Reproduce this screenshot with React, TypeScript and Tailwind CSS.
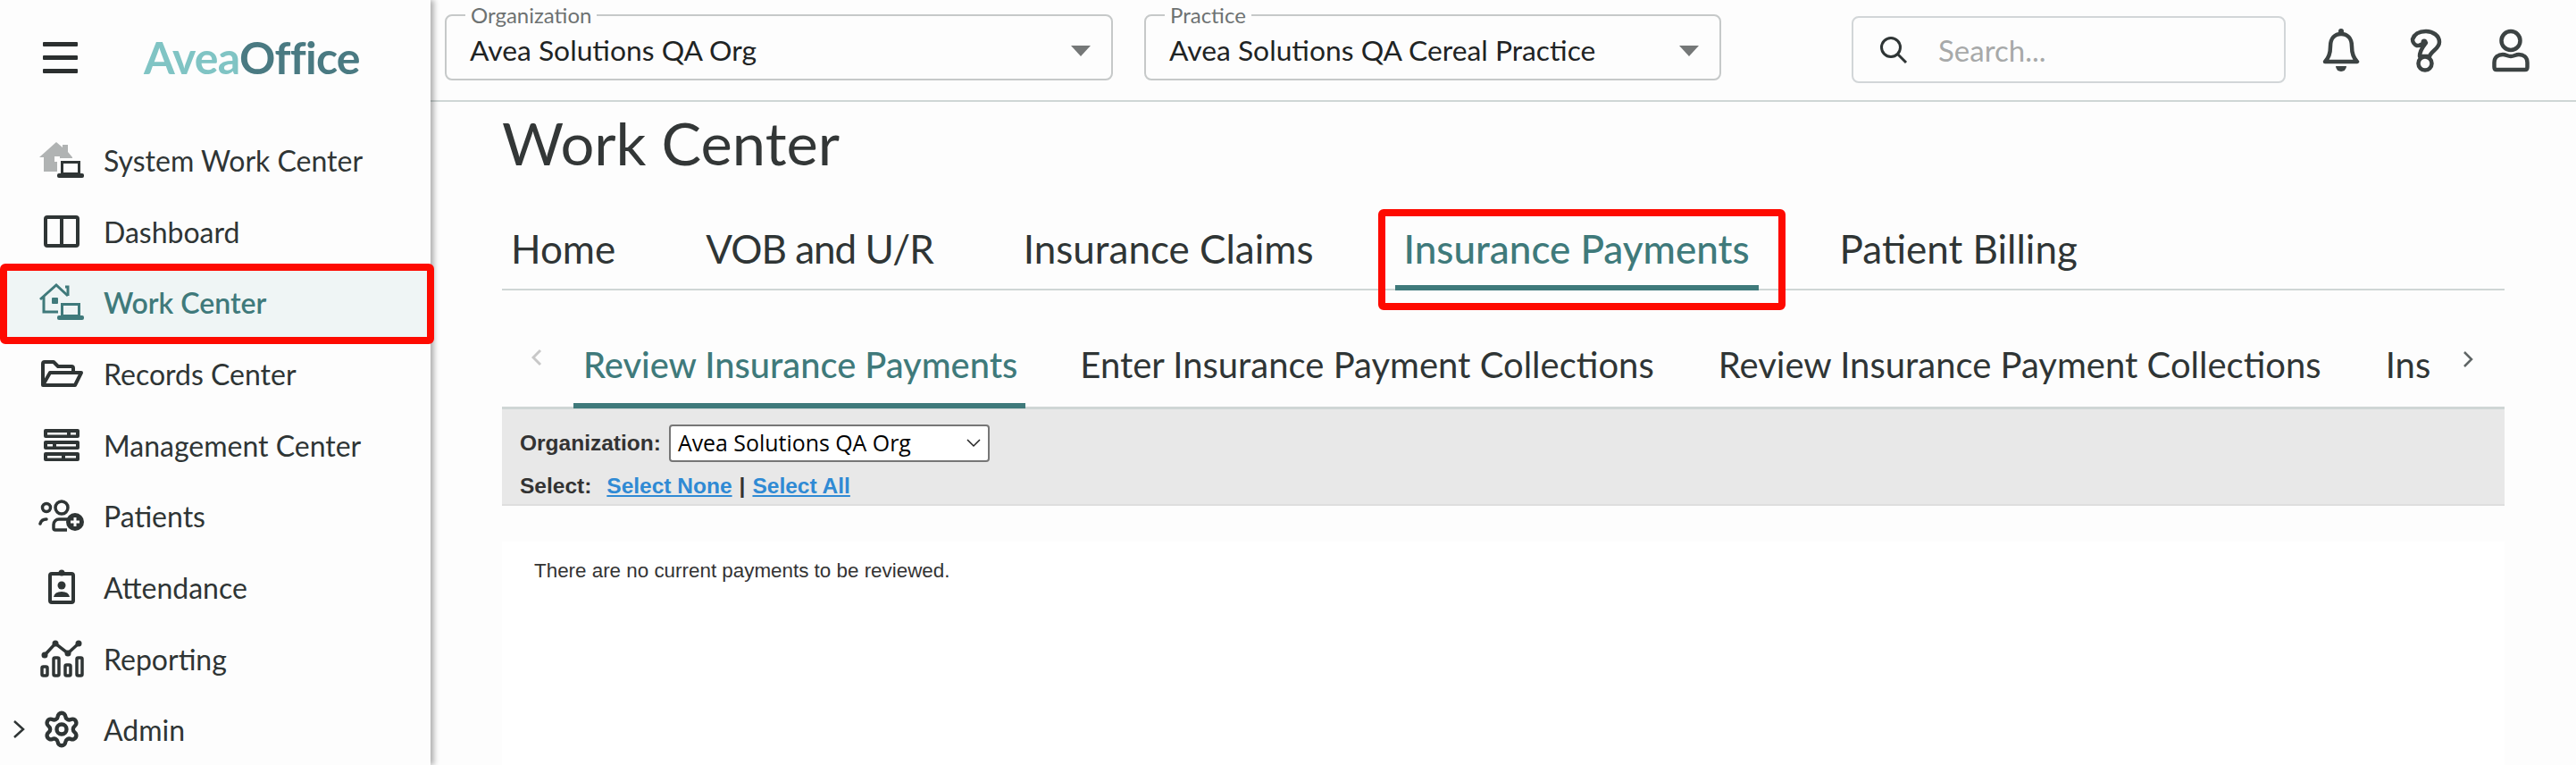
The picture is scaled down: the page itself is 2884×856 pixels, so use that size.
import {Settings} from 'lucide-react';
import React from 'react';

const INK = '#2f3535';
const TEAL = '#3f7a7b';

function SystemIcon() {
    return (
        <svg width="52" height="44" viewBox="0 0 52 44">
            <path d="M1 19 L20 2 L27 8 V5 H33 V13 L38 19 V20 H25 Q21 20 21 24 V35 H6 V19 Z" fill="#b0b3b3"/>
            <rect x="18" y="18" width="6" height="6" fill="#fdfdfd"/>
            <rect x="26.5" y="24.5" width="19" height="13" fill="none" stroke={INK} strokeWidth="3"/>
            <rect x="21" y="37" width="30" height="5" rx="2" fill={INK}/>
        </svg>
    );
}

function WorkIcon() {
    return (
        <svg width="52" height="44" viewBox="0 0 52 44">
            <path d="M2 19 L20 3 L33 15 M6 16 V33 H22" fill="none" stroke={TEAL} strokeWidth="3"/>
            <path d="M30 5 H33 V15" fill="none" stroke={TEAL} strokeWidth="3"/>
            <rect x="15" y="17" width="7" height="7" rx="1" fill={TEAL}/>
            <rect x="26.5" y="24.5" width="19" height="13" fill="none" stroke={TEAL} strokeWidth="3"/>
            <rect x="21" y="37" width="30" height="5" rx="2" fill={TEAL}/>
        </svg>
    );
}

function DashboardIcon() {
    return (
        <svg width="52" height="44" viewBox="0 0 52 44">
            <rect x="8" y="6" width="36" height="32" rx="2" fill="none" stroke={INK} strokeWidth="4"/>
            <path d="M26 6 V38" stroke={INK} strokeWidth="4"/>
        </svg>
    );
}

function FolderIcon() {
    return (
        <svg width="52" height="44" viewBox="0 0 52 44">
            <path d="M5 35 V11 a2 2 0 0 1 2-2 h10 l5 5 h15 a2 2 0 0 1 2 2 v5" fill="none" stroke={INK} strokeWidth="4" strokeLinejoin="round"/>
            <path d="M5 35 L13 21 H48 L41 35 Z" fill="none" stroke={INK} strokeWidth="4" strokeLinejoin="round"/>
        </svg>
    );
}

function ManagementIcon() {
    return (
        <svg width="52" height="44" viewBox="0 0 52 44">
            <rect x="6" y="4" width="40" height="10" rx="2" fill={INK}/>
            <rect x="6" y="17" width="40" height="10" rx="2" fill={INK}/>
            <rect x="6" y="30" width="40" height="10" rx="2" fill={INK}/>
            <rect x="10" y="8" width="22" height="2.5" fill="#fdfdfd"/>
            <rect x="36" y="8" width="6" height="2.5" fill="#fdfdfd"/>
            <rect x="10" y="21" width="6" height="2.5" fill="#fdfdfd"/>
            <rect x="20" y="21" width="22" height="2.5" fill="#fdfdfd"/>
            <rect x="10" y="34" width="16" height="2.5" fill="#fdfdfd"/>
            <rect x="30" y="34" width="12" height="2.5" fill="#fdfdfd"/>
        </svg>
    );
}

function PatientsIcon() {
    return (
        <svg width="52" height="44" viewBox="0 0 52 44">
            <circle cx="9" cy="13" r="4.5" fill="none" stroke={INK} strokeWidth="3.5"/>
            <circle cx="26" cy="13" r="7" fill="none" stroke={INK} strokeWidth="3.5"/>
            <path d="M2 31 a7 7 0 0 1 7-5" fill="none" stroke={INK} strokeWidth="3.5" strokeLinecap="round"/>
            <path d="M33 26 H23 a6 6 0 0 0-6 6 v4 a2 2 0 0 0 2 2 h13" fill="none" stroke={INK} strokeWidth="3.5"/>
            <circle cx="41" cy="29" r="10" fill={INK}/>
            <path d="M41 24 V34 M36 29 H46" stroke="#fdfdfd" strokeWidth="3"/>
        </svg>
    );
}

function AttendanceIcon() {
    return (
        <svg width="52" height="44" viewBox="0 0 52 44">
            <rect x="13" y="7" width="26" height="32" rx="2" fill="none" stroke={INK} strokeWidth="4"/>
            <circle cx="26" cy="6" r="3.5" fill={INK}/>
            <circle cx="26" cy="20" r="4.5" fill={INK}/>
            <path d="M17 33 q1-6 9-6 t9 6 z" fill={INK}/>
        </svg>
    );
}

function ReportingIcon() {
    return (
        <svg width="52" height="44" viewBox="0 0 52 44">
            <path d="M7 18 L19 5 L33 16 L45 5" fill="none" stroke={INK} strokeWidth="3.5"/>
            <circle cx="7" cy="18" r="3.5" fill={INK}/>
            <circle cx="19" cy="5" r="3.5" fill={INK}/>
            <circle cx="33" cy="16" r="3.5" fill={INK}/>
            <circle cx="45" cy="5" r="3.5" fill={INK}/>
            <rect x="4" y="31" width="6" height="10" rx="1.5" fill="none" stroke={INK} strokeWidth="3.5"/>
            <rect x="17" y="21" width="6" height="20" rx="1.5" fill="none" stroke={INK} strokeWidth="3.5"/>
            <rect x="30" y="29" width="6" height="12" rx="1.5" fill="none" stroke={INK} strokeWidth="3.5"/>
            <rect x="43" y="21" width="6" height="20" rx="1.5" fill="none" stroke={INK} strokeWidth="3.5"/>
        </svg>
    );
}

function GearIcon() {
    return (
        <div className="flex w-[52px] justify-center">
            <Settings size={44} strokeWidth={2.4} color={INK}/>
        </div>
    );
}

function NavItem({icon, name, active, expandable}: { icon: React.ReactNode, name: string, active?: boolean, expandable?: boolean }) {
    return (
        <div className={active ? "relative flex h-[80px] items-center bg-[#eff5f5] text-[#3f7a7b] font-semibold" : "flex h-[80px] items-center text-[#2f3535]"}>
            <div className="flex w-[43px] justify-center">
                {expandable && (
                    <svg width="14" height="22" viewBox="0 0 14 22" className="ml-[-1px]">
                        <path d="M2 2 L12 11 L2 20" fill="none" stroke={INK} strokeWidth="2.5"/>
                    </svg>
                )}
            </div>
            {icon}
            <span className="ml-[21px] pt-[2px] text-[32px]">{name}</span>
            {active && <div className="absolute -top-[4px] left-0 h-[90px] w-[486px] rounded-[6px] border-[8px] border-[#fe0a00]"/>}
        </div>
    );
}

function Sidebar() {
    return (
        <div className="relative z-10 flex h-[856px] w-[482px] shrink-0 flex-col overflow-visible bg-[#fdfdfd] shadow-[4px_0_6px_rgba(0,0,0,0.3)]">
            <div className="flex h-[140px] items-center pb-[10px]">
                <div className="ml-[48px] flex w-[39px] flex-col gap-[10px]">
                    <div className="h-[5px] rounded-[1px] bg-[#2b2f2f]"/>
                    <div className="h-[5px] rounded-[1px] bg-[#2b2f2f]"/>
                    <div className="h-[5px] rounded-[1px] bg-[#2b2f2f]"/>
                </div>
                <div className="ml-[74px] text-[50px] font-bold tracking-[-0.7px]">
                    <span className="text-[#80c4c4]">Avea</span>
                    <span className="text-[#4a7a82]">Office</span>
                </div>
            </div>
            <NavItem icon={<SystemIcon/>} name="System Work Center"/>
            <NavItem icon={<DashboardIcon/>} name="Dashboard"/>
            <NavItem icon={<WorkIcon/>} name="Work Center" active/>
            <NavItem icon={<FolderIcon/>} name="Records Center"/>
            <NavItem icon={<ManagementIcon/>} name="Management Center"/>
            <NavItem icon={<PatientsIcon/>} name="Patients"/>
            <NavItem icon={<AttendanceIcon/>} name="Attendance"/>
            <NavItem icon={<ReportingIcon/>} name="Reporting"/>
            <NavItem icon={<GearIcon/>} name="Admin" expandable/>
        </div>
    );
}

function HeaderSelect({label, value, width}: { label: string, value: string, width: string }) {
    return (
        <fieldset className={"h-[82px] rounded-[8px] border-2 border-[#c6c9c9] pl-[26px] pr-[23px] " + width}>
            <legend className="ml-[-5px] px-[6px] text-[24px] leading-[18px] text-[#6d7272]">{label}</legend>
            <div className="flex items-center justify-between pt-[7px]">
                <span className="text-[31.8px] text-[#1f2424]">{value}</span>
                <svg width="22" height="12" viewBox="0 0 22 12"><path d="M0 0 H22 L11 12 Z" fill="#757878"/></svg>
            </div>
        </fieldset>
    );
}

function TopBar() {
    return (
        <div className="flex h-[114px] items-start border-b-2 border-[#cfd6d5] pl-[16px]">
            <div className="mt-[8px] flex gap-[35px]">
                <HeaderSelect label="Organization" value="Avea Solutions QA Org" width="w-[748px]"/>
                <HeaderSelect label="Practice" value="Avea Solutions QA Cereal Practice" width="w-[646px]"/>
            </div>
            <div className="mt-[18px] ml-[146px] flex h-[75px] w-[486px] items-center rounded-[8px] border-2 border-[#d2d6d8] pl-[29px]">
                <svg width="32" height="32" viewBox="0 0 32 32">
                    <circle cx="13" cy="13" r="10.5" fill="none" stroke={INK} strokeWidth="3"/>
                    <path d="M20.5 20.5 L30 30" stroke={INK} strokeWidth="3"/>
                </svg>
                <span className="ml-[34px] pt-[2px] text-[33px] text-[#a7a9a9]">Search...</span>
            </div>
            <div className="mt-[32px] ml-[41px] flex items-start gap-[56px]">
                <svg width="42" height="49" viewBox="0 0 42 49">
                    <circle cx="21" cy="3" r="3" fill="#3c4343"/>
                    <path d="M3 37 C8 32 9 27 9 20 C9 11 14 6 21 6 C28 6 33 11 33 20 C33 27 34 32 39 37 Z" fill="none" stroke="#3c4343" strokeWidth="4.5" strokeLinejoin="round"/>
                    <path d="M15 42 H27 a6 6 0 0 1 -12 0 Z" fill="#3c4343"/>
                </svg>
                <svg width="36" height="49" viewBox="0 0 36 49">
                    <path d="M3 12 C5 6 11 3 18 3 C26 3 33 8 33 15 C33 22 26 24 23 29 L22 31 H11 C11 24 15 20 18 16 C14 16 11 20 8 19 C5 18 3 15 3 12 Z" fill="none" stroke="#3c4343" strokeWidth="4.5" strokeLinejoin="round"/>
                    <circle cx="16" cy="15" r="3.5" fill="#3c4343"/>
                    <circle cx="17" cy="39" r="7.5" fill="#fdfdfd" stroke="#3c4343" strokeWidth="4.5"/>
                </svg>
                <svg width="42" height="49" viewBox="0 0 42 49">
                    <circle cx="21" cy="13.5" r="10.5" fill="none" stroke="#3c4343" strokeWidth="4.5"/>
                    <path d="M2.5 43 V38 C2.5 32 7 29 12 29 C16 29 17 31 21 31 C25 31 26 29 30 29 C35 29 39.5 32 39.5 38 V43 C39.5 45 38.5 46 37 46 H5 C3.5 46 2.5 45 2.5 43 Z" fill="none" stroke="#3c4343" strokeWidth="4.5" strokeLinejoin="round"/>
                </svg>
            </div>
        </div>
    );
}

function Tab({name, active, boxed, tight}: { name: string, active?: boolean, boxed?: boolean, tight?: boolean }) {
    return (
        <div className={active ? "relative -mb-[2px] h-[72px] border-b-[6px] border-[#3f7a7b] px-[10px] font-medium text-[#3f7a7b]" : "h-[72px] px-[10px] text-[#2f3535]"}>
            <span className={tight ? "text-[44px] leading-[50px] tracking-[-1px]" : "text-[44px] leading-[50px]"}>{name}</span>
            {boxed && <div className="absolute -top-[19px] -left-[19px] -bottom-[28px] -right-[30px] rounded-[6px] border-[8px] border-[#fe0a00]"/>}
        </div>
    );
}

function SubTab({name, active}: { name: string, active?: boolean }) {
    return (
        <div className={active ? "h-[76px] shrink-0 border-b-[6px] border-[#3f7a7b] pt-[3px] pl-[11px] pr-[9px] font-medium text-[#3f7a7b]" : "h-[76px] shrink-0 px-[11px] pt-[3px] text-[#2f3535]"}>
            <span className={active ? "text-[39.8px] leading-[48px]" : "text-[40px] leading-[48px]"}>{name}</span>
        </div>
    );
}

function Main() {
    return (
        <div className="min-w-0 flex-1">
            <TopBar/>
            <div className="mx-[80px] pt-[6px]">
                <h1 className="text-[66.8px] leading-[79px] text-[#333737]">Work Center</h1>
                <div className="flex h-[126px] gap-[81px] border-b-2 border-[#cfd6d5] pt-[54px]">
                    <Tab name="Home"/>
                    <Tab name="VOB and U/R" tight/>
                    <Tab name="Insurance Claims"/>
                    <Tab name="Insurance Payments" active boxed/>
                    <Tab name="Patient Billing"/>
                </div>
                <div className="flex h-[133px] items-end border-b-[3px] border-[#cfd6d5]">
                    <div className="flex h-[66px] w-[80px] shrink-0 items-start pt-[1px] pl-[33px]">
                        <svg width="12" height="20" viewBox="0 0 12 20"><path d="M10 2 L2 10 L10 18" fill="none" stroke="#c8c8c8" strokeWidth="3"/></svg>
                    </div>
                    <div className="-mb-[2px] flex min-w-0 flex-1 gap-[50px] overflow-hidden">
                        <SubTab name="Review Insurance Payments" active/>
                        <SubTab name="Enter Insurance Payment Collections"/>
                        <SubTab name="Review Insurance Payment Collections"/>
                        <SubTab name="Insurance"/>
                    </div>
                    <div className="flex h-[66px] w-[81px] shrink-0 items-start pt-[3px] pl-[34px]">
                        <svg width="12" height="20" viewBox="0 0 12 20"><path d="M2 2 L10 10 L2 18" fill="none" stroke="#5f6565" strokeWidth="2.5"/></svg>
                    </div>
                </div>
                <div className="h-[108px] border-b-2 border-[#dedede] bg-[#e8e8e8] pt-[17px] pl-[20px] font-['Liberation_Sans'] text-[24.5px] font-bold text-[#333333]">
                    <div className="flex items-center gap-[9px]">
                        <span>Organization:</span>
                        <div className="flex h-[42px] w-[359px] items-center justify-between rounded-[4px] border-2 border-[#767676] bg-white pl-[8px] pr-[8px] font-['Open_Sans'] text-[24.9px] font-normal text-black">
                            <span>Avea Solutions QA Org</span>
                            <svg width="16" height="10" viewBox="0 0 16 10"><path d="M1 1 L8 8 L15 1" fill="none" stroke="#222" strokeWidth="1.5"/></svg>
                        </div>
                    </div>
                    <div className="mt-[9px] flex gap-[17px]">
                        <span>Select:</span>
                        <span>
                            <span className="text-[#2f8ad4] underline">Select None</span>
                            <span className="mx-[8px]">|</span>
                            <span className="text-[#2f8ad4] underline">Select All</span>
                        </span>
                    </div>
                </div>
                <div className="mt-[40px] h-[250px] bg-white pt-[16px] pl-[36px] font-['Liberation_Sans'] text-[22.4px] text-[#333333]">
                    There are no current payments to be reviewed.
                </div>
            </div>
        </div>
    );
}

export default function App() {
    return (
        <div className="flex h-[856px] w-[2884px] overflow-hidden bg-[#fdfdfd] font-['Lato',sans-serif]">
            <Sidebar/>
            <Main/>
        </div>
    );
}
